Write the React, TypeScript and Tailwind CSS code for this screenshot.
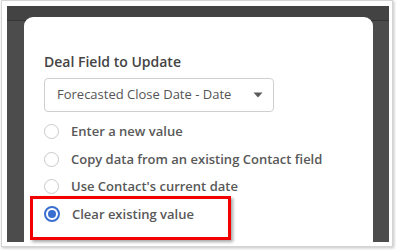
import React from "react";

const font = { fontFamily: '"Open Sans", "Noto Sans", sans-serif' };

function Radio({ checked }: { checked?: boolean }) {
  if (checked) {
    return (
      <span className="flex h-[16px] w-[16px] shrink-0 items-center justify-center rounded-full border-2 border-[#3b6fcf] bg-white">
        <span className="h-[8px] w-[8px] rounded-full bg-[#3b6fcf]" />
      </span>
    );
  }
  return <span className="h-[15px] w-[15px] shrink-0 rounded-full border border-[#c9c9c9] bg-white" />;
}

function Option({ label, checked }: { label: string; checked?: boolean }) {
  return (
    <div className="flex h-[27.5px] items-center gap-[12px]">
      <Radio checked={checked} />
      <span className="text-[13px] font-semibold leading-none text-[#585858]">{label}</span>
    </div>
  );
}

export default function App() {
  return (
    <div className="relative h-[250px] w-[396px] overflow-hidden bg-white" style={font}>
      <div className="ml-px h-[247px] w-[392px] border border-[#d4d4d4] bg-white pl-[5px] pt-[5px] shadow-[1px_1px_3px_rgba(0,0,0,0.25)]">
        <div className="h-[236px] w-[382px] overflow-hidden bg-[linear-gradient(to_bottom,#434343_0,#434343_14px,#363636_14px,#363636_15px,#4c4c4c_15px)] px-[17px] pt-[11px]">
          <div className="h-[240px] w-[349px] rounded-t-[9px] bg-white pl-[20px] pt-[35px]">
            <div className="h-[20px] text-[14px] font-semibold leading-[20px] text-[#444]">Deal Field to Update</div>
            <div className="mt-[6px] flex h-[34px] w-[230px] items-center justify-between rounded-[4px] border border-[#cfcfcf] pl-[12px] pr-[10px]">
              <span className="text-[13px] text-[#555]">Forecasted Close Date - Date</span>
              <svg width="10" height="6" viewBox="0 0 10 6">
                <path d="M0.5 0.5 L9.5 0.5 L5 5.5 Z" fill="#5a5a5a" />
              </svg>
            </div>
            <div className="mt-[6px] flex flex-col">
              <Option label="Enter a new value" />
              <Option label="Copy data from an existing Contact field" />
              <Option label="Use Contact's current date" />
              <Option label="Clear existing value" checked />
            </div>
          </div>
        </div>
      </div>
      <div className="absolute left-[30px] top-[196px] h-[44px] w-[201px] border-[3px] border-[#f20000] shadow-[2px_2px_3px_rgba(0,0,0,0.35)]" />
    </div>
  );
}
